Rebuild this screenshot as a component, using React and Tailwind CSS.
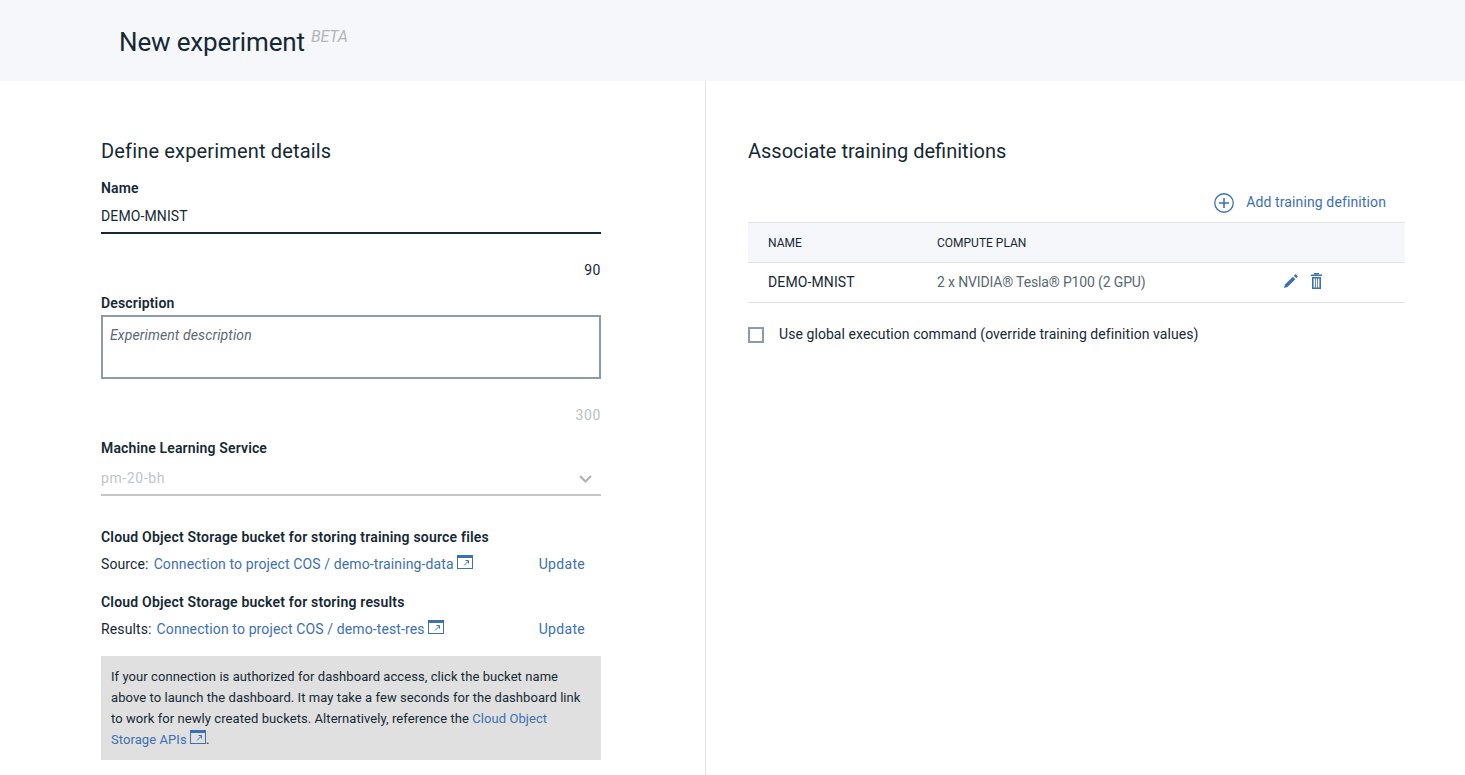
function ExternalIcon() {
  return (
    <svg width="16" height="15" viewBox="0 0 16 15" className="inline-block align-baseline -mb-[1px]" fill="none">
      <rect x="0.5" y="0.5" width="15" height="13" stroke="#3d70b2" />
      <rect x="0" y="0" width="16" height="3" fill="#3d70b2" />
      <path d="M7 10.5 L11.5 6 M8.5 5.5 H11.5 V8.5" stroke="#3d70b2" strokeWidth="1" />
    </svg>
  )
}

function TrashIcon() {
  return (
    <svg width="11" height="16" viewBox="0 0 11 16" fill="#3d70b2">
      <rect x="3" y="0" width="5" height="1.5" />
      <rect x="0" y="1.5" width="11" height="1.5" />
      <path fillRule="evenodd" d="M1 4h9v12H1z M2.6 5.5v9h1.4v-9z M4.8 5.5v9h1.4v-9z M7 5.5v9h1.4v-9z" />
    </svg>
  )
}

function PencilIcon() {
  return (
    <svg width="14" height="14" viewBox="0 0 14 14" fill="#3d70b2">
      <path d="M0 14 L1 10.5 L8.8 2.7 L11.3 5.2 L3.5 13 Z" />
      <path d="M9.8 1.7 L10.9 0.6 Q11.5 0 12.2 0.6 L13.4 1.8 Q14 2.5 13.4 3.1 L12.3 4.2 Z" />
    </svg>
  )
}

export default function App() {
  return (
    <div className="min-h-screen h-[775px] overflow-hidden bg-white text-[#152935] font-['Roboto',sans-serif] text-[14px] tracking-[0.12px]">
      <header className="h-[81px] bg-[#f5f7fa] pl-[119px] pt-[25px]">
        <h1 className="text-[26px] leading-[34px] tracking-[-0.15px]">
          New experiment
          <span className="ml-[6px] relative -top-[9px] text-[16px] italic text-[#b5b5b5]">BETA</span>
        </h1>
      </header>

      <div className="flex h-[694px]">
        <section className="w-[706px] border-r border-[#dfe3e6] pl-[101px] pr-[104px] pt-[56px]">
          <h2 className="text-[20px] leading-[28px] tracking-[0.16px]">Define experiment details</h2>

          <label className="block mt-[14px] font-semibold leading-[18px] tracking-[0.15px]">Name</label>
          <div className="mt-[10px] h-[27px] border-b-2 border-[#152935] leading-[18px]">DEMO-MNIST</div>
          <div className="mt-[26px] text-right leading-[20px] tracking-[0.5px]">90</div>

          <label className="block mt-[13px] font-semibold leading-[20px] tracking-[0.15px]">Description</label>
          <div className="mt-[2px] h-[64px] border-2 border-[#8c9ba5] px-[7px] py-[9px] italic text-[#5a6872] leading-[18px]">
            Experiment description
          </div>
          <div className="mt-[26px] text-right leading-[20px] text-[#b8c1c1] tracking-[0.6px]">300</div>

          <label className="block mt-[13px] font-semibold leading-[20px] tracking-[0.15px]">Machine Learning Service</label>
          <div className="mt-[5px] h-[33px] border-b-2 border-[#c6c6c6] flex justify-between text-[#c0c6c9] leading-[30px] tracking-[0.6px]">
            <span>pm-20-bh</span>
            <svg width="13" height="8" viewBox="0 0 13 8" fill="none" className="mr-[9px] mt-[12px]">
              <path d="M1 1 L6.5 6.5 L12 1" stroke="#b0b0b0" strokeWidth="2" />
            </svg>
          </div>

          <div className="mt-[31px] font-semibold leading-[20px] tracking-[0.2px]">Cloud Object Storage bucket for storing training source files</div>
          <div className="mt-[7px] flex justify-between pr-[16px] leading-[20px]">
            <span>
              Source:<a className="ml-[5px] text-[#3d70b2]">Connection to project COS / demo-training-data</a>{' '}
              <ExternalIcon />
            </span>
            <a className="text-[#3d70b2] tracking-[0.3px]">Update</a>
          </div>

          <div className="mt-[18px] font-semibold leading-[20px] tracking-[0.2px]">Cloud Object Storage bucket for storing results</div>
          <div className="mt-[7px] flex justify-between pr-[16px] leading-[20px]">
            <span>
              Results:<a className="ml-[5px] text-[#3d70b2]">Connection to project COS / demo-test-res</a>{' '}
              <ExternalIcon />
            </span>
            <a className="text-[#3d70b2] tracking-[0.3px]">Update</a>
          </div>

          <div className="mt-[17px] h-[104px] bg-[#e0e0e0] px-[10px] py-[10px] text-[13px] leading-[21px] tracking-[0.07px]">
            If your connection is authorized for dashboard access, click the bucket name above to launch the dashboard. It may take a few seconds for the dashboard link to work for newly created buckets. Alternatively, reference the{' '}
            <a className="text-[#3d70b2]">Cloud Object Storage APIs</a> <ExternalIcon />.
          </div>
        </section>

        <section className="flex-1 pl-[42px] pr-[60px] pt-[56px]">
          <h2 className="text-[20px] leading-[28px] tracking-normal">Associate training definitions</h2>

          <div className="mt-[26px] flex justify-end items-center pr-[19px] h-[22px] text-[#3d70b2]">
            <svg width="20" height="20" viewBox="0 0 20 20" fill="none" stroke="#3d70b2" className="mr-[12px] mt-[2px]">
              <circle cx="10" cy="10" r="9.25" strokeWidth="1.3" />
              <path d="M10 5 V15 M5 10 H15" strokeWidth="1.6" />
            </svg>
            Add training definition
          </div>

          <div className="mt-[9px] h-[41px] border-y border-[#dfe3e6] bg-[#f5f7fa] flex items-center pl-[20px] text-[12px] tracking-normal">
            <span className="w-[169px]">NAME</span>
            <span>COMPUTE PLAN</span>
          </div>
          <div className="h-[40px] border-b border-[#dfe3e6] flex items-center pl-[20px]">
            <span className="w-[169px]">DEMO-MNIST</span>
            <span className="w-[347px] text-[#5a6872] tracking-[-0.15px]">2 x NVIDIA® Tesla® P100 (2 GPU)</span>
            <span className="flex items-center gap-[13px] -mt-[4px]">
              <PencilIcon />
              <TrashIcon />
            </span>
          </div>

          <div className="mt-[22px] flex items-center">
            <span className="h-[16px] w-[16px] border-2 border-[#8c9ba5] mt-[2px]" />
            <span className="ml-[15px] leading-[18px] tracking-[0.07px]">Use global execution command (override training definition values)</span>
          </div>
        </section>
      </div>
    </div>
  )
}
